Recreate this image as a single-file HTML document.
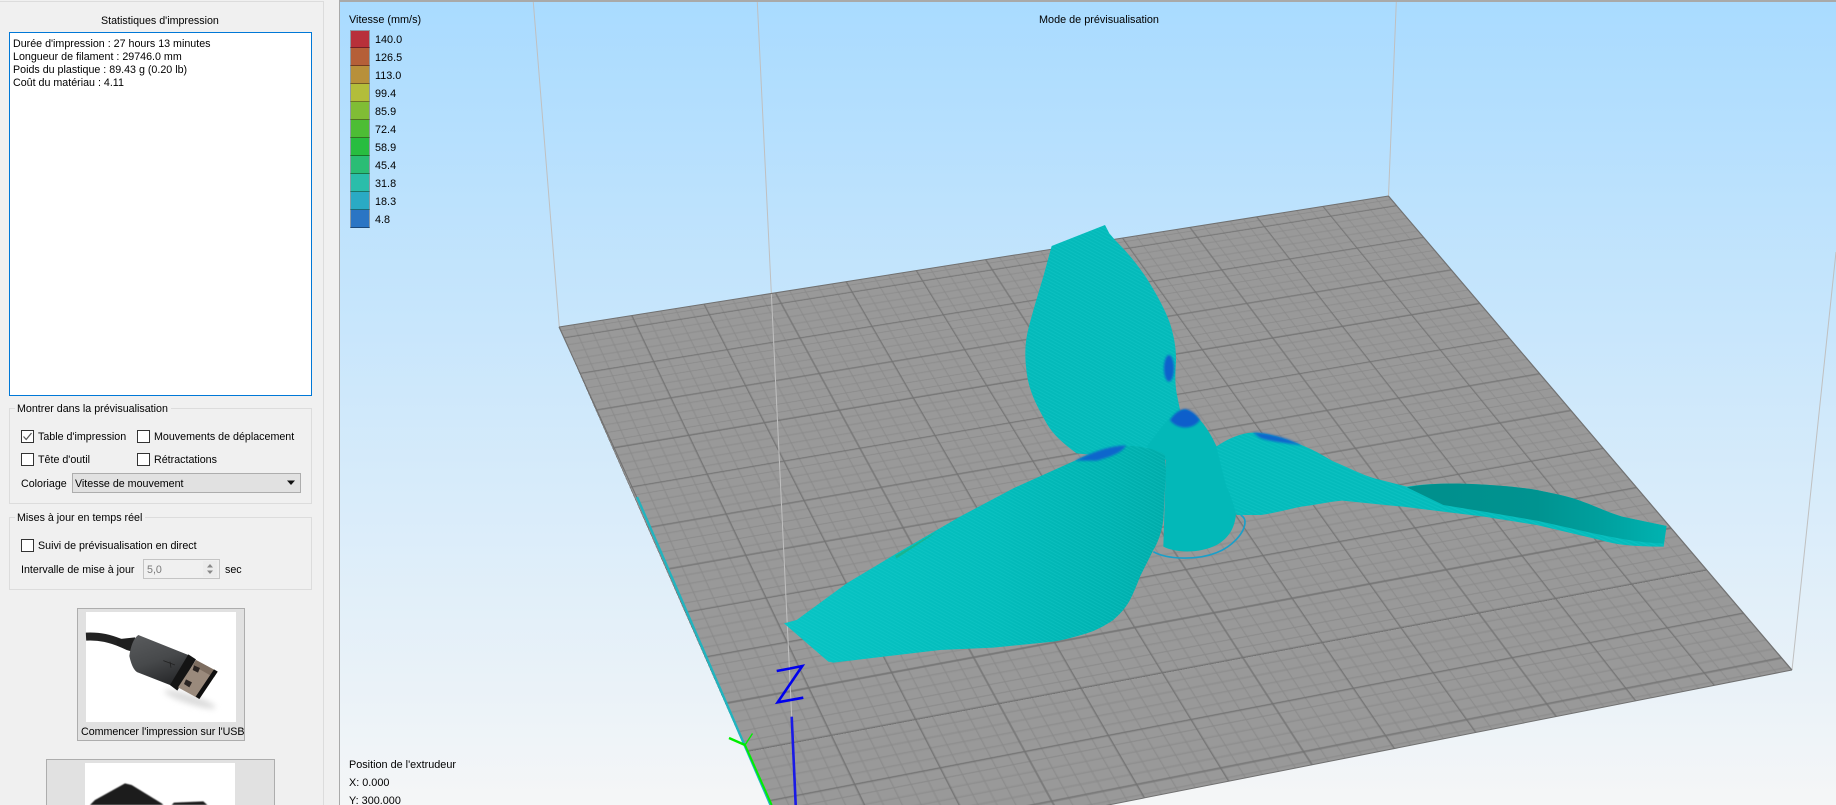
<!DOCTYPE html>
<html lang="fr">
<head>
<meta charset="utf-8">
<title>Mode de prévisualisation</title>
<style>
html,body{margin:0;padding:0;width:1836px;height:805px;overflow:hidden;background:#f0f0f0;}
body{position:relative;font-family:"Liberation Sans",Arial,sans-serif;font-size:11px;color:#000;}
.t{position:absolute;white-space:nowrap;line-height:14px;height:14px;}
#view{position:absolute;left:0;top:0;width:1836px;height:805px;overflow:hidden;background:linear-gradient(to bottom,#a9dbff 0,#f5f6f7 805px);font-size:10.85px;}
#plate{position:absolute;left:0;top:0;width:1000px;height:620px;transform-origin:0 0;
transform:matrix3d(.91179,-.11938,0,.000059268,.139161,.604097,0,-.00030705,0,0,1,0,559,327,0,1);
background-color:#999;}
#plate svg{position:absolute;left:0;top:0;display:block;}
#over{position:absolute;left:0;top:0;}
#panel{position:absolute;left:0;top:0;width:340px;height:805px;background:#f0f0f0;overflow:hidden;font-size:10.7px;}
.pb{position:absolute;left:0;top:1px;width:323px;height:803px;border-top:1px solid #dcdcdc;border-right:1px solid #dcdcdc;box-sizing:content-box;}
.vl{position:absolute;left:339px;top:0;width:1px;height:805px;background:#a9a9a9;}
.box{position:absolute;left:9px;top:32px;width:301px;height:362px;background:#fff;border:1px solid #0078d7;}
.grp{position:absolute;border:1px solid #dcdcdc;box-sizing:border-box;}
.lg{background:#f0f0f0;padding:0 3px 0 2px;}
.cb{position:absolute;width:11px;height:11px;border:1px solid #333;background:#fff;}
.combo{position:absolute;left:72px;top:473px;width:227px;height:18px;background:#e1e1e1;border:1px solid #adadad;}
.spin{position:absolute;left:143px;top:559px;width:75px;height:18px;background:#f0f0f0;border:1px solid #c4c4c4;}
.btn{position:absolute;background:#e1e1e1;border:1px solid #adadad;box-sizing:border-box;}
.img{position:absolute;background:#fff;}
.cell{position:absolute;left:350px;width:20px;height:18px;box-sizing:border-box;border-left:1px solid #8a9aa5;border-right:1px solid #8a9aa5;border-bottom:1px solid rgba(0,0,0,.38);}
</style>
</head>
<body>
<div id="view">
  <div id="plate">
    <svg width="1000" height="620" viewBox="0 0 1000 620" xmlns="http://www.w3.org/2000/svg">
      <line x1="500" y1="0" x2="500" y2="620" stroke="#8a8a8a" stroke-width="1000" stroke-dasharray="1 8.858" stroke-dashoffset="4.838"/>
      <line x1="0" y1="310" x2="1000" y2="310" stroke="#8a8a8a" stroke-width="620" stroke-dasharray="1 15.667" stroke-dashoffset=".5"/>
      <line x1="500" y1="0" x2="500" y2="620" stroke="#727272" stroke-width="1000" stroke-dasharray="1.3 47.99" stroke-dashoffset="34.56"/>
      <line x1="0" y1="310" x2="1000" y2="310" stroke="#727272" stroke-width="620" stroke-dasharray="1.3 82.033" stroke-dashoffset=".65"/>
    </svg>
  </div>
  <svg id="over" width="1836" height="805" viewBox="0 0 1836 805" xmlns="http://www.w3.org/2000/svg">
    <defs>
      <linearGradient id="b2" x1="0" y1="0" x2="1" y2="0">
        <stop offset="0" stop-color="#08c4c4"/><stop offset=".55" stop-color="#03bcbb"/><stop offset=".85" stop-color="#00b3b1"/><stop offset="1" stop-color="#00acaa"/>
      </linearGradient>
      <linearGradient id="b3d" x1="0" y1="0" x2="1" y2="0">
        <stop offset="0" stop-color="#008f8c"/><stop offset=".5" stop-color="#009390"/><stop offset=".75" stop-color="#00a09e"/><stop offset="1" stop-color="#00b3b1"/>
      </linearGradient>
      <pattern id="tex" patternUnits="userSpaceOnUse" width="9" height="9" patternTransform="rotate(28)">
        <rect width="9" height="9" fill="none"/>
        <rect width="9" height="3" fill="#1fd0d0" opacity=".28"/>
      </pattern>
      <filter id="sft" x="-40%" y="-40%" width="180%" height="180%"><feGaussianBlur stdDeviation="3"/></filter>
      <path id="p1" d="M305,138 L465,75 L478,100 L495,120 C530,155 560,190 590,235 C625,290 650,340 660,370 C672,410 678,440 678,480 C676,520 674,545 680,580 L690,630 L640,770 L480,770 L380,760 C340,730 310,705 290,670 C262,620 240,580 232,530 C224,480 224,440 232,400 C245,345 262,290 280,230 Z"/>
      <path id="p2" d="M12,610 L50,600 L200,490 L350,400 L540,290 L700,205 L900,115 C950,92 1000,77 1040,77 C1090,78 1140,92 1155,105 L1158,150 L1150,300 C1145,340 1130,375 1120,390 C1100,430 1090,450 1080,470 C1065,510 1055,530 1050,540 C1030,575 1010,590 1000,600 C970,620 945,632 920,640 C880,652 850,660 820,665 L640,683 L480,690 L160,728 L145,725 Z"/>
      <path id="p3" d="M40,140 C70,115 105,98 130,98 C170,98 215,118 250,135 C290,155 310,172 330,185 C370,205 400,225 430,235 L510,260 C560,250 620,250 670,252 C730,255 790,262 830,270 C870,280 900,288 920,295 C970,315 1000,335 1040,350 L1150,378 L1143,440 C1100,440 1060,437 1050,435 C1010,430 990,420 970,415 L830,375 C780,365 740,358 700,350 L500,320 L350,302 C320,305 280,316 250,320 C210,330 180,340 150,345 L90,345 C80,300 70,270 65,260 Z"/>
    </defs>
    <!-- box lines -->
    <g stroke="#c0c0c0" stroke-width="1" fill="none">
      <line x1="533.3" y1="2" x2="559.3" y2="327"/>
      <line x1="1396.3" y1="2" x2="1388.5" y2="196"/>
      <line x1="1836" y1="252" x2="1792" y2="670"/>
      <line x1="757.3" y1="2" x2="791.7" y2="716.7"/>
    </g>
    <!-- plate edges -->
    <g stroke="#707070" stroke-width="1" fill="none">
      <line x1="559" y1="327" x2="1388.5" y2="196"/>
      <line x1="1388.5" y1="196" x2="1792" y2="670"/>
      <line x1="1792" y1="670" x2="797" y2="866.5"/>
      <line x1="559" y1="327" x2="638" y2="500"/>
    </g>
    <line x1="637" y1="497" x2="770.5" y2="805" stroke="#21b4bf" stroke-width="2.4"/>
    <!-- Blade 1 -->
    <g transform="translate(950,200) scale(.33333)">
      <use href="#p1" fill="#04baba"/>
      <use href="#p1" fill="url(#tex)"/>
      <ellipse cx="657" cy="505" rx="15" ry="40" fill="#0c62cc" filter="url(#sft)"/>
    </g>
    <!-- Hub -->
    <g transform="translate(950,200) scale(.33333)">
      <path d="M610,1055 C650,1078 740,1082 800,1058 C845,1040 885,1000 885,965 C885,955 880,950 872,945" fill="none" stroke="#1a9fc9" stroke-width="5"/>
      <path d="M705,628 C680,630 650,660 625,695 L590,740 L648,780 L640,1040 C680,1060 750,1060 800,1035 C835,1015 855,985 858,940 C850,885 825,800 800,740 C780,695 745,640 705,628 Z" fill="#03b8b8"/>
      <path d="M705,627 C686,629 672,642 660,660 C680,688 728,692 750,660 C738,642 722,629 705,627 Z" fill="#0a5fcb" filter="url(#sft)"/>
    </g>
    <!-- Blade 3 -->
    <g transform="translate(1200,400) scale(.40568,.33333)">
      <use href="#p3" fill="#04bbbb"/>
      <use href="#p3" fill="url(#tex)"/>
      <path d="M510,262 C560,250 620,250 670,252 C730,255 790,262 830,270 C870,280 900,288 920,295 C970,315 1000,335 1040,350 L1150,378 L1143,430 C1090,430 1010,410 970,400 L830,362 L700,335 L600,315 Z" fill="url(#b3d)"/>
      <path d="M130,97 C170,99 210,112 252,136 C215,130 170,124 148,114 Z" fill="#0f66cc" filter="url(#sft)"/>
    </g>
    <!-- Blade 2 -->
    <g transform="translate(780,420) scale(.33333)">
      <use href="#p2" fill="url(#b2)"/>
      <use href="#p2" fill="url(#tex)"/>
      <path d="M885,122 C935,98 985,78 1038,76 C1025,100 990,110 950,122 Z" fill="#0f66cc" filter="url(#sft)"/>
      <path d="M345,408 L470,335 L450,350 L350,415 Z" fill="#18b58f"/>
    </g>
    <!-- Z axis -->
    <g stroke="#0000ee" fill="none" stroke-linecap="butt">
      <path d="M776.7,671 L790,668.5 M790,668.5 L802.3,666 L777.7,702.3 L803.3,697.7" stroke-width="2.6"/>
      <line x1="791.7" y1="716.7" x2="795.7" y2="805" stroke-width="2.6" stroke="#1a1ae6"/>
    </g>
    <!-- Y axis -->
    <g stroke="#00ee00" fill="none">
      <path d="M729,738 L745,745" stroke-width="2.4"/>
      <path d="M752.5,733.5 L745,745" stroke-width="1.4"/>
      <line x1="745" y1="745" x2="771.7" y2="805" stroke-width="2"/>
    </g>
  </svg>

  <!-- legend -->
  <div class="t" style="left:349px;top:13px;">Vitesse (mm/s)</div>
  <div class="cell" style="top:30px;background:#b8303a;border-top:1px solid #8a9aa5;"></div>
  <div class="cell" style="top:48px;background:#b55f38;"></div>
  <div class="cell" style="top:66px;background:#b8903a;"></div>
  <div class="cell" style="top:84px;background:#b3bd3a;"></div>
  <div class="cell" style="top:102px;background:#80bd35;"></div>
  <div class="cell" style="top:120px;background:#4dbd35;"></div>
  <div class="cell" style="top:138px;background:#28bd40;"></div>
  <div class="cell" style="top:156px;background:#2abd75;"></div>
  <div class="cell" style="top:174px;background:#2abdaa;"></div>
  <div class="cell" style="top:192px;background:#2aaac4;"></div>
  <div class="cell" style="top:210px;background:#2a75c4;"></div>
  <div class="t" style="left:375px;top:33px;">140.0</div>
  <div class="t" style="left:375px;top:51px;">126.5</div>
  <div class="t" style="left:375px;top:69px;">113.0</div>
  <div class="t" style="left:375px;top:87px;">99.4</div>
  <div class="t" style="left:375px;top:105px;">85.9</div>
  <div class="t" style="left:375px;top:123px;">72.4</div>
  <div class="t" style="left:375px;top:141px;">58.9</div>
  <div class="t" style="left:375px;top:159px;">45.4</div>
  <div class="t" style="left:375px;top:177px;">31.8</div>
  <div class="t" style="left:375px;top:195px;">18.3</div>
  <div class="t" style="left:375px;top:213px;">4.8</div>

  <div class="t" style="left:1039px;top:13px;">Mode de prévisualisation</div>
  <div class="t" style="left:349px;top:758px;">Position de l'extrudeur</div>
  <div class="t" style="left:349px;top:776px;">X: 0.000</div>
  <div class="t" style="left:349px;top:794px;">Y: 300.000</div>
  <div style="position:absolute;left:340px;top:0;width:1496px;height:2px;background:#a9a9a9;"></div>
</div>

<div id="panel">
  <div class="pb"></div>
  <div class="vl"></div>
  <div class="t" style="left:101px;top:14px;">Statistiques d'impression</div>
  <div class="box"></div>
  <div class="t" style="left:13px;top:37px;">Durée d'impression : 27 hours 13 minutes</div>
  <div class="t" style="left:13px;top:50px;">Longueur de filament : 29746.0 mm</div>
  <div class="t" style="left:13px;top:63px;">Poids du plastique : 89.43 g (0.20 lb)</div>
  <div class="t" style="left:13px;top:76px;">Coût du matériau : 4.11</div>

  <div class="grp" style="left:9px;top:408px;width:303px;height:96px;"></div>
  <div class="t lg" style="left:15px;top:402px;">Montrer dans la prévisualisation</div>
  <div class="cb" style="left:21px;top:430px;"></div>
  <svg style="position:absolute;left:21px;top:430px;" width="13" height="13" viewBox="0 0 13 13"><path d="M2.5,6.5 L5.2,9.5 L10.5,3" fill="none" stroke="#555" stroke-width="1.2"/></svg>
  <div class="t" style="left:38px;top:430px;">Table d'impression</div>
  <div class="cb" style="left:137px;top:430px;"></div>
  <div class="t" style="left:154px;top:430px;">Mouvements de déplacement</div>
  <div class="cb" style="left:21px;top:453px;"></div>
  <div class="t" style="left:38px;top:453px;">Tête d'outil</div>
  <div class="cb" style="left:137px;top:453px;"></div>
  <div class="t" style="left:154px;top:453px;">Rétractations</div>
  <div class="t" style="left:21px;top:477px;">Coloriage</div>
  <div class="combo"></div>
  <div class="t" style="left:75px;top:477px;">Vitesse de mouvement</div>
  <svg style="position:absolute;left:286px;top:480px;" width="10" height="6" viewBox="0 0 10 6"><path d="M1,0.5 L9,0.5 L5,5 Z" fill="#111"/></svg>

  <div class="grp" style="left:9px;top:517px;width:303px;height:73px;"></div>
  <div class="t lg" style="left:15px;top:511px;">Mises à jour en temps réel</div>
  <div class="cb" style="left:21px;top:539px;"></div>
  <div class="t" style="left:38px;top:539px;">Suivi de prévisualisation en direct</div>
  <div class="t" style="left:21px;top:563px;">Intervalle de mise à jour</div>
  <div class="spin"></div>
  <div class="t" style="left:147px;top:563px;color:#7a7a7a;">5,0</div>
  <svg style="position:absolute;left:203px;top:561px;" width="14" height="16" viewBox="0 0 14 16"><rect x="0" y="0" width="14" height="16" fill="#ececec"/><path d="M7,3 L10,6.5 L4,6.5 Z M7,13 L10,9.5 L4,9.5 Z" fill="#888"/></svg>
  <div class="t" style="left:225px;top:563px;">sec</div>

  <div class="btn" style="left:77px;top:608px;width:168px;height:133px;"></div>
  <div class="img" style="left:86px;top:612px;width:150px;height:110px;"></div>
  <div class="btn" style="left:46px;top:759px;width:229px;height:46px;border-bottom:0;"></div>
  <div class="img" style="left:85px;top:763px;width:150px;height:42px;"></div>

  <svg style="position:absolute;left:70px;top:600px;" width="210" height="205" viewBox="0 0 630 615" xmlns="http://www.w3.org/2000/svg">
    <defs>
      <linearGradient id="ub" x1="0" y1="0" x2="0.35" y2="1">
        <stop offset="0" stop-color="#5a5c5e"/><stop offset=".55" stop-color="#47494b"/><stop offset="1" stop-color="#28292b"/>
      </linearGradient>
      <filter id="us" x="-30%" y="-80%" width="160%" height="260%"><feGaussianBlur stdDeviation="9"/></filter>
      <filter id="ud"><feGaussianBlur stdDeviation="1.6"/></filter>
    </defs>
    <ellipse cx="360" cy="298" rx="80" ry="14" transform="rotate(18 360 298)" fill="#dcdcdc" filter="url(#us)"/>
    <path d="M48,110 C90,108 120,115 160,132" fill="none" stroke="#222" stroke-width="24"/>
    <path d="M140,118 L195,112 L205,160 L170,150 L140,136 Z" fill="#1e1e1e"/>
    <path d="M205,105 C190,115 182,140 178,168 C185,200 195,215 205,218 L300,255 L322,270 L355,165 Z" fill="url(#ub)"/>
    <path d="M355,163 L378,178 L322,272 L300,255 Z" fill="#141414"/>
    <path d="M378,180 L443,215 L388,297 L324,262 Z" fill="#9a8a7c"/>
    <path d="M378,180 L443,215 L432,232 L368,196 Z" fill="#7d6d60"/>
    <path d="M432,208 L443,215 L388,297 L377,290 Z" fill="#0f0f0f"/>
    <path d="M372,196 L390,204 L384,218 L368,210 Z" fill="#2a2422"/>
    <path d="M348,238 L366,247 L358,262 L342,252 Z" fill="#2a2422"/>
    <path d="M280,182 L315,195 M300,185 L303,203" stroke="#222" stroke-width="2.5" fill="none"/>
    <g filter="url(#ud)">
      <path d="M60,615 L75,600 L165,550 L185,555 L275,610 L280,615 Z" fill="#1d1d1d"/>
      <path d="M305,615 L312,608 L400,604 L412,615 Z" fill="#1d1d1d"/>
    </g>
  </svg>
  <div class="t" style="left:81px;top:725px;letter-spacing:-.03px;">Commencer l'impression sur l'USB</div>
</div>
</body>
</html>
